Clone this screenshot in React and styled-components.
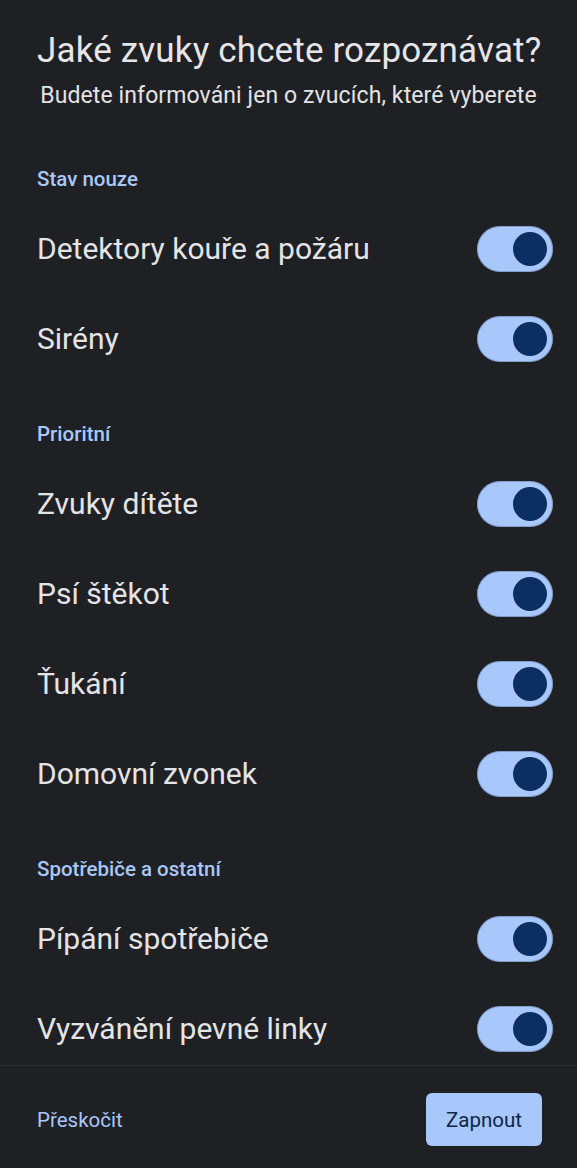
import React, { useState } from 'react';
import styled, { createGlobalStyle } from 'styled-components';

const GlobalStyle = createGlobalStyle`
  html, body {
    margin: 0;
    padding: 0;
    background: #1f2024;
  }
  body {
    font-family: Roboto, "Noto Sans", "Liberation Sans", sans-serif;
  }
`;

const Screen = styled.div`
  height: 1168px;
  display: flex;
  flex-direction: column;
  background: #1f2024;
  color: #e3e3e6;
`;

const Scroller = styled.div`
  flex: 1;
  overflow: hidden;
  padding: 30px 24px 0 37px;
`;

const Title = styled.h1`
  margin: 0 13px 0 0;
  font-size: 35px;
  line-height: 42px;
  font-weight: 400;
  letter-spacing: 0.15px;
  text-align: center;
  white-space: nowrap;
  color: #e6e6ea;
`;

const Subtitle = styled.p`
  margin: 10px 13px 0 0;
  font-size: 23px;
  line-height: 28px;
  letter-spacing: 0.1px;
  text-align: center;
  white-space: nowrap;
  color: #e3e3e6;
`;

const SectionHeader = styled.h2`
  margin: ${(p) => (p.first ? '57px' : '38px')} 0 13px;
  font-size: 20.5px;
  line-height: 24px;
  font-weight: 500;
  color: #a8c7fa;
`;

const Row = styled.div`
  height: 90px;
  display: flex;
  align-items: center;
  justify-content: space-between;
`;

const Label = styled.span`
  font-size: 30px;
  line-height: 36px;
  color: #e4e4e7;
`;

const Track = styled.button`
  width: 76px;
  height: 46px;
  border-radius: 23px;
  border: none;
  padding: 0 6px;
  display: flex;
  align-items: center;
  justify-content: ${(p) => (p.on ? 'flex-end' : 'flex-start')};
  background: ${(p) => (p.on ? '#a8c7fa' : '#44474e')};
  box-shadow: inset 0 0 0 1px rgba(60, 80, 120, 0.35);
  cursor: pointer;
`;

const Thumb = styled.span`
  width: 34px;
  height: 34px;
  border-radius: 50%;
  background: ${(p) => (p.on ? '#0b2e63' : '#8e9099')};
`;

const Footer = styled.div`
  border-top: 1px solid #2e2f34;
  padding: 27px 35px 22px 31px;
  display: flex;
  align-items: center;
  justify-content: space-between;
`;

const SkipLink = styled.a`
  display: block;
  padding: 8px 6px;
  font-size: 20.5px;
  line-height: 30px;
  white-space: nowrap;
  color: #a8c7fa;
  text-decoration: none;
  cursor: pointer;
`;

const EnableButton = styled.button`
  height: 53px;
  padding: 0 20px;
  border: none;
  border-radius: 6px;
  background: #a8c7fa;
  color: #0e2548;
  font-family: inherit;
  font-size: 20.5px;
  line-height: 28px;
  white-space: nowrap;
  cursor: pointer;
`;

const sections = [
  { title: 'Stav nouze', items: ['Detektory kouře a požáru', 'Sirény'] },
  { title: 'Prioritní', items: ['Zvuky dítěte', 'Psí štěkot', 'Ťukání', 'Domovní zvonek'] },
  { title: 'Spotřebiče a ostatní', items: ['Pípání spotřebiče', 'Vyzvánění pevné linky', 'Tekoucí voda'] },
];

function Toggle({ on, onClick }) {
  return (
    <Track on={on ? 1 : 0} onClick={onClick}>
      <Thumb on={on ? 1 : 0} />
    </Track>
  );
}

export default function App() {
  const [enabled, setEnabled] = useState(() => {
    const init = {};
    sections.forEach((s) => s.items.forEach((i) => (init[i] = true)));
    return init;
  });

  const flip = (name) => setEnabled((prev) => ({ ...prev, [name]: !prev[name] }));

  return (
    <Screen>
      <GlobalStyle />
      <Scroller>
        <Title>Jaké zvuky chcete rozpoznávat?</Title>
        <Subtitle>Budete informováni jen o zvucích, které vyberete</Subtitle>
        {sections.map((section, idx) => (
          <div key={section.title}>
            <SectionHeader first={idx === 0 ? 1 : 0}>{section.title}</SectionHeader>
            {section.items.map((item) => (
              <Row key={item}>
                <Label>{item}</Label>
                <Toggle on={enabled[item]} onClick={() => flip(item)} />
              </Row>
            ))}
          </div>
        ))}
      </Scroller>
      <Footer>
        <SkipLink>Přeskočit</SkipLink>
        <EnableButton>Zapnout</EnableButton>
      </Footer>
    </Screen>
  );
}
